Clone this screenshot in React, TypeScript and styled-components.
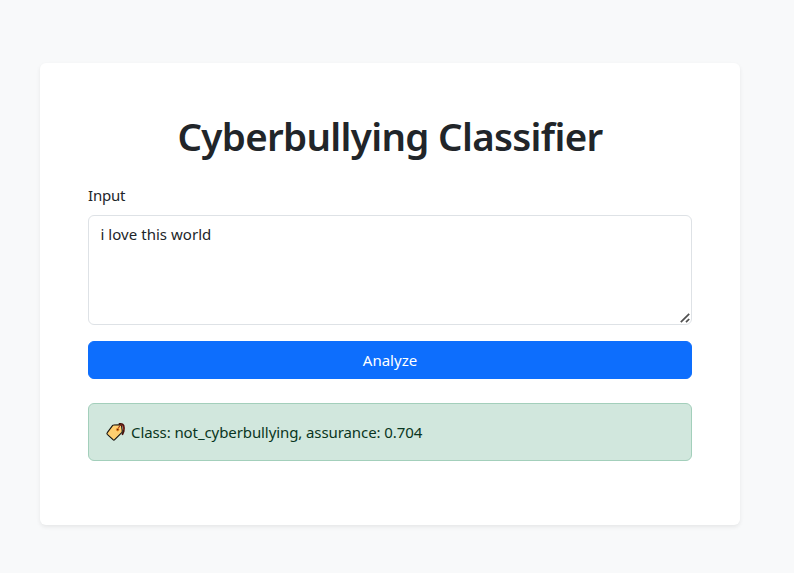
import React, { useState } from "react";
import styled, { createGlobalStyle } from "styled-components";

const GlobalStyle = createGlobalStyle`
  *, *::before, *::after { box-sizing: border-box; }
  body {
    margin: 0;
    background: #f8f9fa;
    color: #212529;
    font-family: "Segoe UI", "Noto Sans", "Open Sans", sans-serif;
    font-size: 16px;
    line-height: 24px;
  }
`;

const Page = styled.main`
  min-height: 573px;
  padding: 63px 54px 48px 40px;
`;

const Card = styled.section`
  width: 700px;
  padding: 48px;
  border-radius: 6px;
  background: #fff;
  box-shadow: 0 2px 4px rgba(0, 0, 0, 0.075);
`;

const Title = styled.h1`
  margin: 0;
  padding-top: 1px;
  height: 72px;
  font-size: 38.5px;
  font-weight: 600;
  line-height: 48px;
  text-align: center;
  white-space: nowrap;
  letter-spacing: -0.68px;
`;

const Form = styled.form`
  display: flex;
  flex-direction: column;
`;

const Label = styled.label`
  margin-bottom: 8px;
  font-size: 15px;
  letter-spacing: -0.2px;
`;

const Field = styled.div`
  position: relative;
  height: 110px;
  margin-bottom: 16px;
`;

const TextArea = styled.textarea`
  display: block;
  width: 100%;
  height: 100%;
  margin: 0;
  padding: 6px 12px 6px 11.5px;
  border: 1px solid #dee2e6;
  border-radius: 6px;
  background: #fff;
  color: #212529;
  font: inherit;
  font-size: 15px;
  letter-spacing: 0.04px;
  resize: none;
  outline: none;
`;

const Grip = styled.svg`
  position: absolute;
  right: 2px;
  bottom: 2px;
  width: 10px;
  height: 10px;
  pointer-events: none;
`;

const SubmitButton = styled.button`
  height: 38px;
  padding: 6px 12px;
  border: 1px solid #0d6efd;
  border-radius: 6px;
  background: #0d6efd;
  color: #fff;
  font: inherit;
  font-size: 15px;
  cursor: pointer;
`;

const ResultAlert = styled.div`
  display: flex;
  align-items: center;
  height: 58px;
  margin: 24px 0 16px;
  padding: 16px;
  border: 1px solid #a3cfbb;
  border-radius: 6px;
  background: #d1e7dd;
  color: #0a3622;
  font-size: 15px;
  letter-spacing: -0.09px;
`;

const TagIcon = styled.svg`
  flex: none;
  width: 22px;
  height: 22px;
  margin-right: 4px;
`;

export default function App() {
  const [text, setText] = useState("i love this world");
  return (
    <>
      <GlobalStyle />
      <Page>
        <Card>
          <Title>Cyberbullying Classifier</Title>
          <Form onSubmit={(e) => e.preventDefault()}>
            <Label htmlFor="input">Input</Label>
            <Field>
              <TextArea id="input" spellCheck={false} value={text} onChange={(e) => setText(e.target.value)} />
              <Grip viewBox="0 0 10 10" aria-hidden="true">
                <path d="M.8 9.2 9.2 .8M6 9.2 9.2 6" stroke="#505050" strokeWidth="1.7" />
              </Grip>
            </Field>
            <SubmitButton type="submit">Analyze</SubmitButton>
          </Form>
          <ResultAlert role="status">
            <TagIcon viewBox="0 0 22 22" aria-hidden="true">
              <path d="M14.500 3q3-.6 4 1.400.8 2.400.2 5.800l-1.200 3" fill="none" stroke="#4a120c" strokeWidth="1.800" strokeLinecap="round" />
              <path d="M8.600 4 15 3.700q1.400 0 1.600 1.400l.7 5q0 .8-.6 1.500l-7 7.100q-.8.800-1.700 0L2.300 13.300q-.8-.8 0-1.700l5.200-7q.5-.6 1.100-.6Z" fill="#ffcf70" stroke="#17130e" strokeWidth="1.100" strokeLinejoin="round" />
              <circle cx="12.700" cy="8.600" r="1.300" fill="#6b2411" stroke="#f7941e" strokeWidth="1" />
              <path d="M13.500 7.200Q14 4.600 16.300 3.800q2.200.3 2.200 5.200" fill="none" stroke="#8f2014" strokeWidth="1" />
            </TagIcon>
            <span>Class: not_cyberbullying, assurance: 0.704</span>
          </ResultAlert>
        </Card>
      </Page>
    </>
  );
}
